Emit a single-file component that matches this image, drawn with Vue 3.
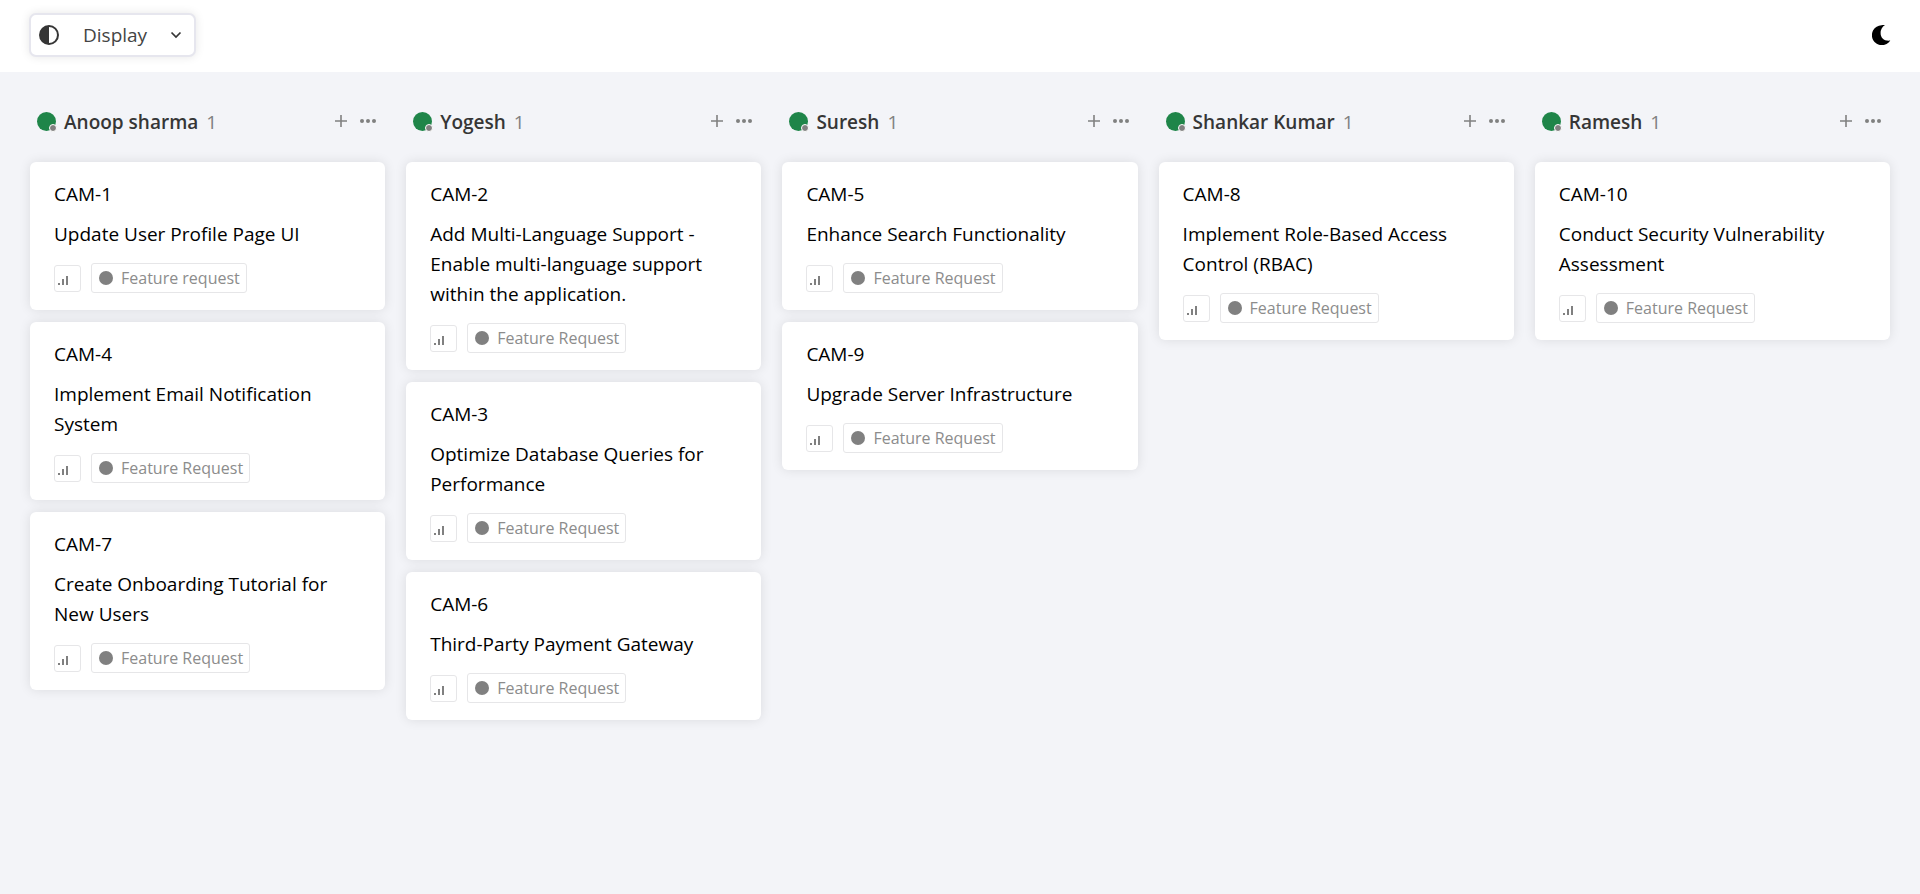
<script setup>
const FR = 'Feature Request'

const columns = [
  {
    name: 'Anoop sharma',
    count: 1,
    cards: [
      { id: 'CAM-1', title: 'Update User Profile Page UI', tag: 'Feature request' },
      { id: 'CAM-4', title: 'Implement Email Notification System', tag: FR },
      { id: 'CAM-7', title: 'Create Onboarding Tutorial for New Users', tag: FR },
    ],
  },
  {
    name: 'Yogesh',
    count: 1,
    cards: [
      {
        id: 'CAM-2',
        title: 'Add Multi-Language Support - Enable multi-language support within the application.',
        tag: FR,
      },
      { id: 'CAM-3', title: 'Optimize Database Queries for Performance', tag: FR },
      { id: 'CAM-6', title: 'Third-Party Payment Gateway', tag: FR },
    ],
  },
  {
    name: 'Suresh',
    count: 1,
    cards: [
      { id: 'CAM-5', title: 'Enhance Search Functionality', tag: FR },
      { id: 'CAM-9', title: 'Upgrade Server Infrastructure', tag: FR },
    ],
  },
  {
    name: 'Shankar Kumar',
    count: 1,
    cards: [{ id: 'CAM-8', title: 'Implement Role-Based Access Control (RBAC)', tag: FR }],
  },
  {
    name: 'Ramesh',
    count: 1,
    cards: [{ id: 'CAM-10', title: 'Conduct Security Vulnerability Assessment', tag: FR }],
  },
]
</script>

<template>
  <div class="page">
    <header class="topbar">
      <button class="display" type="button" aria-haspopup="true">
        <svg width="20" height="20" viewBox="0 0 20 20" aria-hidden="true">
          <circle cx="10" cy="10" r="9" fill="none" stroke="#363636" stroke-width="2" />
          <path d="M10 1a9 9 0 0 0 0 18z" fill="#363636" />
        </svg>
        <span class="display-label">Display</span>
        <svg width="12" height="12" viewBox="0 0 12 12" aria-hidden="true">
          <path d="M1.5 3.5L6 8l4.500-4.500" fill="none" stroke="#363636" stroke-width="1.700" />
        </svg>
      </button>
      <button class="theme" type="button" aria-label="Toggle dark mode">
        <svg width="20" height="20" viewBox="0 0 20 20" aria-hidden="true">
          <path d="M13 0A9.500 9.500 0 0 0 8.600 8C8.600 13 12 16.300 18.300 15.600A10 10 0 1 1 9.500 0.200Q11.400 -0.200 13 0Z" fill="#000" />
        </svg>
      </button>
    </header>

    <main class="board">
      <section v-for="col in columns" :key="col.name" class="column">
        <div class="column-head">
          <span class="avatar"><span class="presence"></span></span>
          <h2 class="name">{{ col.name }}</h2>
          <span class="count">{{ col.count }}</span>
          <div class="actions">
            <button class="icon-btn" type="button" aria-label="Add card">
              <svg width="12" height="12" viewBox="0 0 12 12" aria-hidden="true">
                <path d="M6 0v12M0 6h12" stroke="#808080" stroke-width="1.600" />
              </svg>
            </button>
            <button class="icon-btn" type="button" aria-label="More options">
              <svg width="16" height="12" viewBox="0 0 16 12" aria-hidden="true">
                <g fill="#808080">
                  <circle cx="2" cy="6" r="2" />
                  <circle cx="8" cy="6" r="2" />
                  <circle cx="14" cy="6" r="2" />
                </g>
              </svg>
            </button>
          </div>
        </div>

        <article v-for="card in col.cards" :key="card.id" class="card">
          <span class="card-id">{{ card.id }}</span>
          <h3 class="card-title">{{ card.title }}</h3>
          <div class="tags">
            <span class="priority">
              <svg width="11" height="9" viewBox="0 0 11 9" aria-hidden="true">
                <g fill="#808080">
                  <rect x="0" y="7" width="2" height="2" />
                  <rect x="4" y="3" width="2" height="6" />
                  <rect x="8" y="0" width="2" height="9" />
                </g>
              </svg>
            </span>
            <span class="tag"><span class="dot"></span>{{ card.tag }}</span>
          </div>
        </article>
      </section>
    </main>
  </div>
</template>

<style>
body {
  background: #f3f4f8;
}
</style>

<style scoped>
.page {
  min-height: 100vh;
  background: #f3f4f8;
  color: #000;
  font-family: "Open Sans", "Noto Sans", sans-serif;
  font-size: 19px;
  line-height: 30px;
}

button {
  font: inherit;
  color: inherit;
  cursor: pointer;
}

.topbar {
  display: flex;
  align-items: center;
  justify-content: space-between;
  box-sizing: border-box;
  height: 72px;
  padding: 0 28px 2px 29px;
  background: #fff;
}

.display {
  display: flex;
  align-items: center;
  padding: 5px 12px 5px 8px;
  border: 2px solid #e6e6ee;
  border-radius: 7px;
  background: #fff;
  box-shadow: 0 0 10px rgba(0, 0, 0, 0.1);
  color: #444;
}

.display-label {
  margin: 0 23px 0 24px;
}

.theme {
  display: flex;
  padding: 0;
  border: 0;
  background: none;
}

.board {
  display: grid;
  grid-template-columns: repeat(5, minmax(0, 1fr));
  gap: 21px;
  align-items: start;
  padding: 30px;
}

.column {
  display: flex;
  flex-direction: column;
  gap: 12px;
}

.column-head {
  display: flex;
  align-items: center;
  height: 38px;
  margin-bottom: 10px;
  padding: 0 9px 0 7px;
}

.avatar {
  position: relative;
  width: 19px;
  height: 19px;
  border-radius: 50%;
  background: #1f8549;
}

.presence {
  position: absolute;
  right: -1px;
  bottom: -1px;
  width: 6px;
  height: 6px;
  border: 1px solid #fff;
  border-radius: 50%;
  background: #808080;
}

.name {
  margin: 0 8px;
  padding-top: 2px;
  color: #363636;
  font-size: inherit;
  font-weight: 600;
}

.count {
  padding-top: 2px;
  color: #808080;
}

.actions {
  display: flex;
  gap: 13px;
  margin-left: auto;
}

.icon-btn {
  display: flex;
  padding: 0;
  border: 0;
  background: none;
}

.card {
  padding: 17px 24px;
  border-radius: 6px;
  background: #fff;
  box-shadow: 0 0 12px rgba(0, 0, 0, 0.1);
}

.card-id {
  display: block;
}

.card-title {
  margin: 10px 0 14px;
  font-size: inherit;
  font-weight: 400;
}

.tags {
  display: flex;
  align-items: center;
  gap: 10px;
}

.priority {
  display: flex;
  align-items: flex-end;
  box-sizing: border-box;
  width: 27px;
  height: 27px;
  padding: 0 0 6px 3px;
  border: 1px solid #e6e6e8;
  border-radius: 3px;
}

.tag {
  display: flex;
  align-items: center;
  gap: 8px;
  padding: 0 6px 0 7px;
  border: 1px solid #e6e6e8;
  border-radius: 3px;
  color: #8c8c8c;
  font-size: 16px;
  line-height: 28px;
}

.dot {
  width: 14px;
  height: 14px;
  border-radius: 50%;
  background: #808080;
}
</style>
